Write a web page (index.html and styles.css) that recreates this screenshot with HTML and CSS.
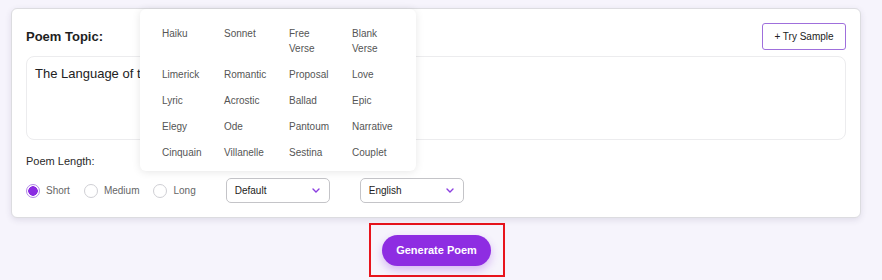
FILE: index.html
```
<!DOCTYPE html>
<html>
<head>
    <title>Poem Generator</title>
    <link rel="stylesheet" href="styles.css">
</head>
<body>
    <div class="card">
        <div class="topic-head">
            <label class="topic-label">Poem Topic:</label>
            <button class="sample-btn">+ Try Sample</button>
        </div>
        <textarea class="topic-input">The Language of the Stars</textarea>

        <div class="length-label">Poem Length:</div>
        <div class="options-row">
            <label class="radio checked"><span class="dot"></span>Short</label>
            <label class="radio"><span class="dot"></span>Medium</label>
            <label class="radio"><span class="dot"></span>Long</label>
            <div class="select">
                <span>Default</span>
                <svg width="8" height="5" viewBox="0 0 8 5"><path d="M1 1l3 3 3-3" fill="none" stroke="#8b3fe0" stroke-width="1.4" stroke-linecap="round"/></svg>
            </div>
            <div class="select">
                <span>English</span>
                <svg width="8" height="5" viewBox="0 0 8 5"><path d="M1 1l3 3 3-3" fill="none" stroke="#8b3fe0" stroke-width="1.4" stroke-linecap="round"/></svg>
            </div>
        </div>

        <!-- poem type menu, open over the topic box -->
        <div class="type-menu">
            <span>Haiku</span><span>Sonnet</span><span>Free Verse</span><span>Blank Verse</span>
            <span>Limerick</span><span>Romantic</span><span>Proposal</span><span>Love</span>
            <span>Lyric</span><span>Acrostic</span><span>Ballad</span><span>Epic</span>
            <span>Elegy</span><span>Ode</span><span>Pantoum</span><span>Narrative</span>
            <span>Cinquain</span><span>Villanelle</span><span>Sestina</span><span>Couplet</span>
        </div>
    </div>

    <div class="generate-wrap">
        <div class="highlight">
            <button class="generate-btn">Generate Poem</button>
        </div>
    </div>
</body>
</html>
```

FILE: styles.css
```
body {
    margin: 0;
    padding: 8px 21px 0 11px;
    background-color: #f6f4fc;
    font-family: "Liberation Sans", Arial, sans-serif;
    color: #222;
}
.card {
    position: relative;
    width: 850px;
    box-sizing: border-box;
    background: #fff;
    border: 1px solid #dcdce0;
    border-radius: 6px;
    box-shadow: 0 2px 6px rgba(60, 50, 90, 0.12);
    padding: 14px 14px 14px 14px;
}
.topic-head {
    display: flex;
    justify-content: space-between;
    align-items: center;
    height: 27px;
}
.topic-label {
    font-size: 13px;
    font-weight: bold;
    color: #1e1e1e;
}
.sample-btn {
    width: 84px;
    height: 27px;
    background: #fff;
    border: 1.5px solid #9f6fdc;
    border-radius: 3px;
    font-family: inherit;
    font-size: 10px;
    color: #222;
    padding: 0;
    cursor: pointer;
}
.topic-input {
    display: block;
    margin-top: 6px;
    width: 820px;
    height: 84px;
    box-sizing: border-box;
    border: 1px solid #ececee;
    border-radius: 8px;
    padding: 9px 8px;
    font-family: inherit;
    font-size: 13px;
    color: #222;
    resize: none;
    outline: none;
}
.length-label {
    margin-top: 14px;
    font-size: 11px;
    line-height: 14px;
    color: #2a2a2a;
}
.options-row {
    margin-top: 10px;
    display: flex;
    align-items: center;
    height: 25px;
}
.radio {
    display: flex;
    align-items: center;
    gap: 6px;
    font-size: 10px;
    color: #666;
    margin-right: 14px;
}
.radio:last-of-type {
    margin-right: 30px;
}
.dot {
    width: 14px;
    height: 14px;
    box-sizing: border-box;
    border: 1px solid #cfcfd4;
    border-radius: 50%;
    background: #fff;
}
.radio.checked .dot {
    border: 1px solid #b48ae8;
    background: radial-gradient(circle, #8a2be2 0 4.5px, #fff 5px);
}
.select {
    width: 104px;
    height: 25px;
    box-sizing: border-box;
    border: 1px solid #c4c4c8;
    border-radius: 5px;
    display: flex;
    align-items: center;
    justify-content: space-between;
    padding: 0 9px 0 8px;
    font-size: 10px;
    color: #222;
    margin-right: 30px;
}
.type-menu {
    position: absolute;
    left: 128px;
    top: 0;
    width: 276px;
    box-sizing: border-box;
    padding: 17px 0 11px 22px;
    background: #fff;
    border-radius: 6px;
    box-shadow: 0 1px 8px rgba(0, 0, 0, 0.1);
    display: grid;
    grid-template-columns: 62px 65px 63px 60px;
    row-gap: 11px;
    font-size: 10px;
    line-height: 15px;
    color: #555;
}
.type-menu span {
    max-width: 44px;
    white-space: normal;
}
.generate-wrap {
    display: flex;
    justify-content: center;
    margin-top: 5px;
    width: 850px;
}
.highlight {
    width: 136px;
    height: 54px;
    box-sizing: border-box;
    border: 2px solid #e8141c;
    display: flex;
    align-items: center;
    justify-content: center;
    margin-left: 1px;
}
.generate-btn {
    width: 109px;
    height: 31px;
    border: none;
    border-radius: 16px;
    background: #8e2de2;
    color: #fff;
    font-family: inherit;
    font-size: 11px;
    font-weight: bold;
    box-shadow: 0 4px 8px rgba(142, 45, 226, 0.3);
    cursor: pointer;
}
```
